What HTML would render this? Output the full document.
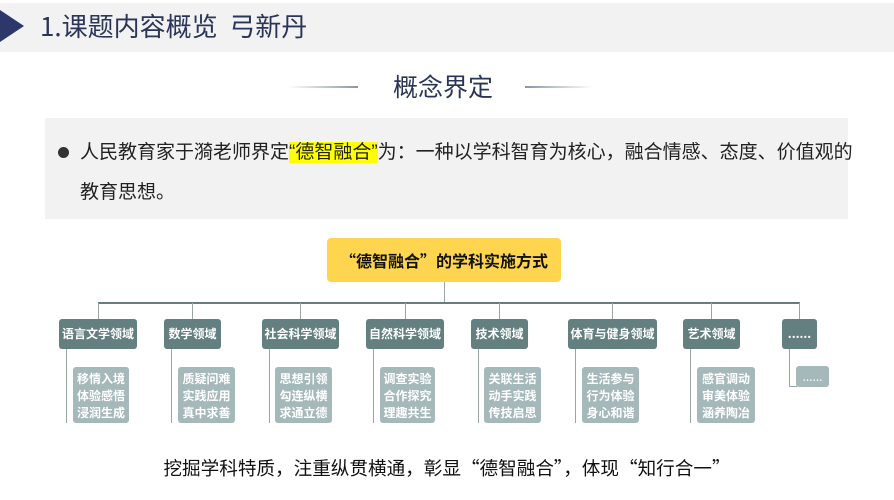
<!DOCTYPE html>
<html><head><meta charset="utf-8"><style>
body{margin:0;width:894px;height:500px;background:#fff;position:relative;overflow:hidden;font-family:"Noto Sans CJK SC","Liberation Sans",sans-serif}
div{position:absolute;box-sizing:border-box}
.n{background:#647f80;color:#fff;font-weight:bold;font-size:12px;top:319px;height:30px;line-height:30px;text-align:center;border-radius:3px;white-space:nowrap}
.c{background:#a5b8ba;color:#fff;font-size:12px;font-weight:bold;top:367px;height:56px;line-height:17px;padding-top:3px;text-align:center;border-radius:3px}
.v{background:#9aa5a6;width:1px}
</style></head><body>
<div style="left:0;top:3px;width:894px;height:49px;background:#f2f2f2"></div>
<svg style="position:absolute;left:0;top:10px" width="25" height="33"><polygon points="0,0 24,16 0,32" fill="#2b3869"/></svg>
<div style="left:40px;top:9px;font-size:26px;color:#2b3558;line-height:34px;white-space:nowrap">1.课题内容概览&nbsp;&nbsp;弓新丹</div>
<div style="left:288px;top:86px;width:70px;height:2px;background:linear-gradient(90deg,#fff,#8a93b0)"></div>
<div style="left:525px;top:86px;width:68px;height:2px;background:linear-gradient(90deg,#8a93b0,#fff)"></div>
<div style="left:393px;top:70px;font-size:25px;color:#2b3558;line-height:32px;white-space:nowrap">概念界定</div>
<div style="left:45px;top:118px;width:803px;height:101px;background:#f2f2f2"></div>
<div style="left:58px;top:147px;width:11px;height:11px;border-radius:50%;background:#333"></div>
<div style="left:80px;top:133px;font-size:19px;color:#222;line-height:40px;width:780px;white-space:nowrap;font-family:'Liberation Sans','Noto Sans CJK SC',sans-serif">人民教育家于漪老师界定<span style="background:#ffff00">“德智融合”</span>为：一种以学科智育为核心，融合情感、态度、价值观的<br>教育思想。</div>
<div style="left:327px;top:238px;width:234px;height:44px;background:#ffd44f;border-radius:4px;font-weight:bold;font-size:16px;line-height:44px;text-align:center;color:#111;white-space:nowrap">“德智融合”的学科实施方式</div>
<div class="v" style="left:444px;top:282px;height:21px"></div>
<div style="left:98px;top:302px;width:702px;height:2px;background:#647f80"></div>
<div class="v" style="left:98px;top:303px;height:16px"></div>
<div class="v" style="left:192px;top:303px;height:16px"></div>
<div class="v" style="left:300px;top:303px;height:16px"></div>
<div class="v" style="left:405px;top:303px;height:16px"></div>
<div class="v" style="left:499px;top:303px;height:16px"></div>
<div class="v" style="left:612px;top:303px;height:16px"></div>
<div class="v" style="left:711px;top:303px;height:16px"></div>
<div class="v" style="left:799px;top:303px;height:16px"></div>
<div class="n" style="left:59px;width:78px">语言文学领域</div>
<div class="n" style="left:164px;width:57px">数学领域</div>
<div class="n" style="left:262px;width:77px">社会科学领域</div>
<div class="n" style="left:366px;width:78px">自然科学领域</div>
<div class="n" style="left:471px;width:57px">技术领域</div>
<div class="n" style="left:568px;width:89px">体育与健身领域</div>
<div class="n" style="left:683px;width:57px">艺术领域</div>
<div class="n" style="left:782px;width:35px">......</div>
<div class="v" style="left:66px;top:349px;height:74px"></div>
<div class="v" style="left:171px;top:349px;height:74px"></div>
<div class="v" style="left:269px;top:349px;height:74px"></div>
<div class="v" style="left:373px;top:349px;height:74px"></div>
<div class="v" style="left:478px;top:349px;height:74px"></div>
<div class="v" style="left:575px;top:349px;height:74px"></div>
<div class="v" style="left:690px;top:349px;height:74px"></div>
<div class="v" style="left:789px;top:349px;height:38px"></div>
<div style="left:789px;top:386px;width:8px;height:1px;background:#9aa5a6"></div>
<div class="c" style="left:73px;width:56px">移情入境<br>体验感悟<br>浸润生成</div>
<div class="c" style="left:178px;width:57px">质疑问难<br>实践应用<br>真中求善</div>
<div class="c" style="left:275px;width:57px">思想引领<br>勾连纵横<br>求通立德</div>
<div class="c" style="left:380px;width:55px">调查实验<br>合作探究<br>理趣共生</div>
<div class="c" style="left:484px;width:57px">关联生活<br>动手实践<br>传技启思</div>
<div class="c" style="left:582px;width:57px">生活参与<br>行为体验<br>身心和谐</div>
<div class="c" style="left:697px;width:58px">感官调动<br>审美体验<br>涵养陶冶</div>
<div class="c" style="left:796px;top:366px;width:33px;height:21px;line-height:21px;padding:0;font-weight:normal">......</div>
<div style="left:0;top:455px;width:894px;text-align:center;font-size:18.6px;color:#111;line-height:26px;white-space:nowrap">挖掘学科特质，注重纵贯横通，彰显“德智融合”，体现“知行合一”</div>
</body></html>
